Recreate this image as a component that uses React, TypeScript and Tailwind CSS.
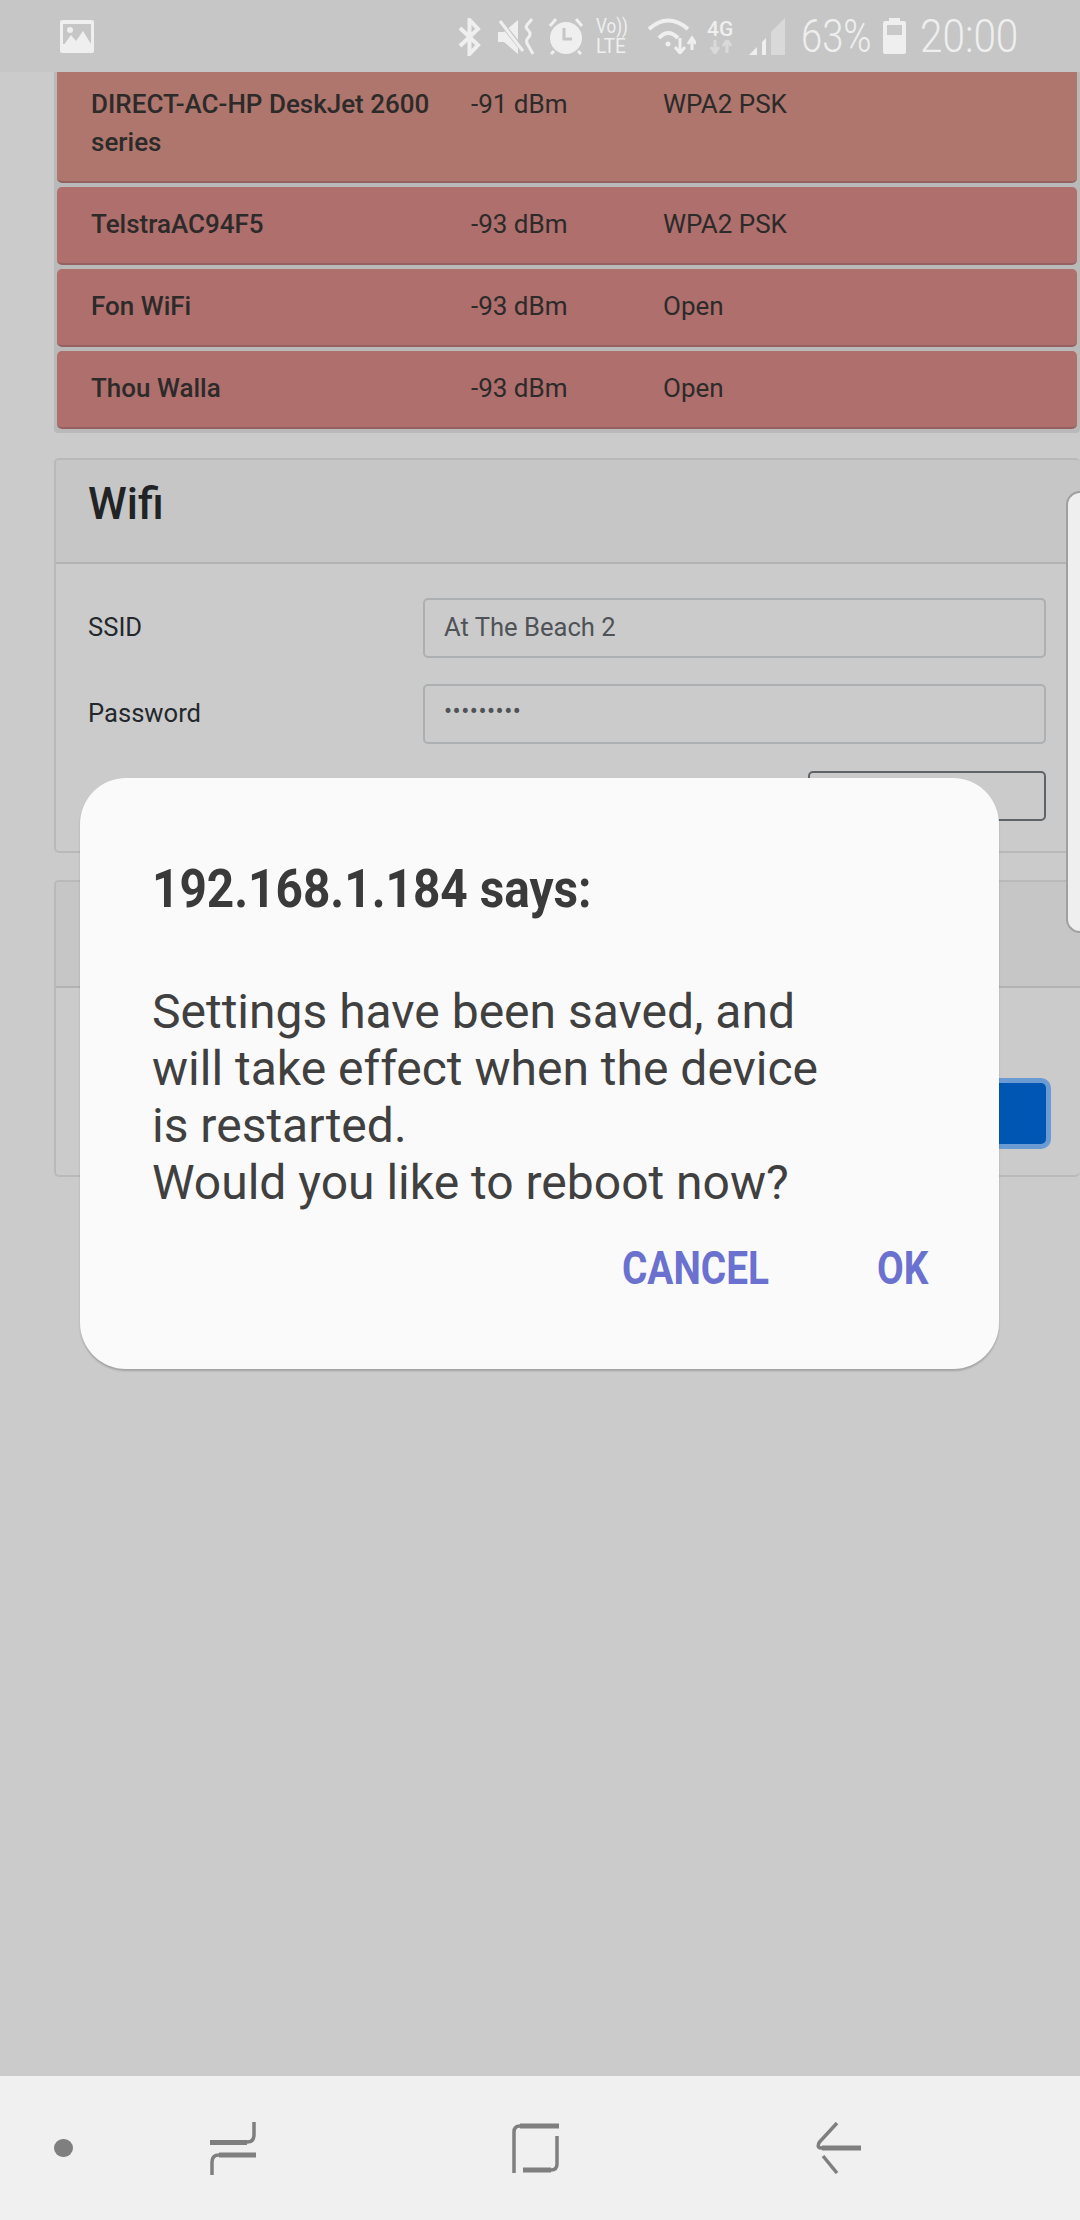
const FONT = "font-['Roboto',sans-serif]"

const NETWORKS = [
  { name: 'DIRECT-AC-HP DeskJet 2600 series', signal: '-91 dBm', security: 'WPA2 PSK', bg: 'bg-[#ae766d]' },
  { name: 'TelstraAC94F5', signal: '-93 dBm', security: 'WPA2 PSK', bg: 'bg-[#ae6f6d]' },
  { name: 'Fon WiFi', signal: '-93 dBm', security: 'Open', bg: 'bg-[#ae6f6d]' },
  { name: 'Thou Walla', signal: '-93 dBm', security: 'Open', bg: 'bg-[#ae6f6d]' },
]

function StatusIcons() {
  return (
    <div className="ml-auto flex items-center pr-[65px] text-[#efefef]">
      {/* bluetooth */}
      <svg width="23" height="38" viewBox="0 0 23 38" fill="none" stroke="currentColor" strokeWidth="4" className="mt-[1px]">
        <path d="M2 10 L20 27 L11.5 36 V2 L20 11 L2 28" />
      </svg>
      {/* mute + vibrate */}
      <svg width="38" height="38" viewBox="0 0 38 38" className="ml-[17px] mt-[1px]" fill="currentColor">
        <path d="M0 14 H6 L20 2 V36 L6 24 H0 Z" />
        <path d="M1 2 L28 36" stroke="#c6c6c6" strokeWidth="5" />
        <path d="M2 3 L25 33" stroke="currentColor" strokeWidth="3" />
        <path d="M34 1 L29 7 Q27 9 30 12 Q34 16 30 20 Q27 23 30 27 L35 36" fill="none" stroke="currentColor" strokeWidth="3" />
      </svg>
      {/* alarm */}
      <svg width="36" height="37" viewBox="0 0 36 37" className="ml-[12px]" fill="currentColor">
        <circle cx="18" cy="20" r="16" />
        <path d="M16 10 V21 H24" fill="none" stroke="#c6c6c6" strokeWidth="3" />
        <path d="M2 8 L8 1 M34 8 L28 1 M3 36 L6 33 M33 36 L30 33" fill="none" stroke="currentColor" strokeWidth="3" />
      </svg>
      {/* volte */}
      <div className="ml-[12px] flex w-[37px] flex-col text-[20px] leading-[20px]">
        <span className="origin-left scale-x-[.85] whitespace-nowrap">Vo))</span>
        <span className="origin-left scale-x-[.95] whitespace-nowrap">LTE</span>
      </div>
      {/* wifi */}
      <svg width="48" height="36" viewBox="0 0 48 36" className="ml-[15px]" fill="none" stroke="currentColor">
        <path d="M1 11 Q20 -6 40 11" strokeWidth="4" />
        <path d="M11 20 Q20 10 30 20" strokeWidth="4" />
        <circle cx="20" cy="26" r="2.5" fill="currentColor" stroke="none" />
        <path d="M32 20 V34 M27 29 L32 35 L37 29" strokeWidth="3" />
        <path d="M44 32 V21 M40 26 L44 20 L48 26" strokeWidth="3" />
      </svg>
      {/* 4g */}
      <div className="ml-[11px] flex w-[28px] flex-col items-start">
        <span className="whitespace-nowrap text-[21px] leading-[20px] font-medium">4G</span>
        <svg width="24" height="14" viewBox="0 0 24 14" fill="none" stroke="#d9d9d9" strokeWidth="3" className="mt-[1px] ml-[2px]">
          <path d="M6 0 V12 M2 7 L6 13 L10 7" />
          <path d="M18 13 V1 M14 6 L18 0 L22 6" />
        </svg>
      </div>
      {/* signal */}
      <svg width="36" height="37" viewBox="0 0 36 37" className="ml-[14px]">
        <path d="M22 14 L36 0 V37 H22 Z" fill="#d9d9d9" />
        <path d="M0 37 L8 29 V37 Z M13 24 L17 20 V37 H13 Z" fill="currentColor" />
      </svg>
      <span className="ml-[16px] w-[68px] origin-left scale-x-[.83] whitespace-nowrap text-[46px] leading-[46px] font-light">63%</span>
      {/* battery */}
      <svg width="23" height="36" viewBox="0 0 23 36" className="ml-[14px]">
        <path d="M6 0 H17 V3 H21 Q23 3 23 5 V34 Q23 36 21 36 H2 Q0 36 0 34 V5 Q0 3 2 3 H6 Z" fill="currentColor" />
        <rect x="4" y="7" width="15" height="10" fill="#c9c9c9" />
      </svg>
      <span className="ml-[14px] w-[95px] origin-left scale-x-[.88] whitespace-nowrap text-[46px] leading-[46px] font-light">20:00</span>
    </div>
  )
}

function StatusBar() {
  return (
    <div className="flex h-[72px] shrink-0 items-center bg-[#c6c6c6] pl-[60px]">
      <svg width="34" height="33" viewBox="0 0 34 33" className="mt-[1px]">
        <rect width="34" height="33" rx="2" fill="#efefef" />
        <rect x="3" y="4" width="28" height="20" fill="#c6c6c6" />
        <circle cx="10" cy="10" r="3" fill="#efefef" />
        <path d="M3 26 L11 15 L16 21 L23 11 L31 24 V27 H3 Z" fill="#efefef" />
      </svg>
      <StatusIcons />
    </div>
  )
}

function NetworkList() {
  return (
    <div className="-mt-[5px] flex flex-col gap-[4px] rounded-b-[4px] bg-[#b9b9b9] pr-[3px] pb-[4px] pl-[3px]">
      {NETWORKS.map((n) => (
        <div
          key={n.name}
          className={`flex rounded-[5px] border-b-2 border-[#946060] pt-[18px] pb-[20px] pl-[34px] text-[26px] leading-[38px] text-[#2d2a2a] ${n.bg}`}
        >
          <div className="w-[380px] pr-[30px] font-medium">{n.name}</div>
          <div className="w-[192px]">{n.signal}</div>
          <div>{n.security}</div>
        </div>
      ))}
    </div>
  )
}

function Field({ label, value, dots }: { label: string; value: string; dots?: boolean }) {
  return (
    <div className="flex items-start">
      <div className="w-[335px] pt-[10px] text-[25.6px] leading-[38px] text-[#24282c]">{label}</div>
      <div
        className={`flex h-[60px] w-[623px] items-center rounded-[5px] border-2 border-[#acb0b3] pl-[19px] text-[#4f5357] ${
          dots ? 'pb-[6px] text-[24px] tracking-[0.5px]' : 'pb-[2px] text-[25.6px]'
        }`}
      >
        {value}
      </div>
    </div>
  )
}

function WifiCard() {
  return (
    <div className="mt-[25px] h-[395px] overflow-hidden rounded-[5px] border-2 border-r-0 border-[#b9b9b9]">
      <div className="h-[104px] border-b-2 border-[#b3b3b3] bg-[#c6c6c6] pt-[16px] pl-[32px] text-[44px] leading-[56px] font-medium text-[#212325]">
        Wifi
      </div>
      <div className="flex flex-col pt-[34px] pl-[32px]">
        <Field label="SSID" value="At The Beach 2" />
        <div className="mt-[26px]">
          <Field label="Password" value="•••••••••" dots />
        </div>
        <div className="mt-[27px] ml-[720px] h-[50px] w-[238px] rounded-[5px] border-2 border-[#5f6468]" />
      </div>
    </div>
  )
}

function SaveCard() {
  return (
    <div className="mt-[27px] h-[297px] overflow-hidden rounded-[5px] border-2 border-r-0 border-[#b9b9b9]">
      <div className="h-[106px] border-b-2 border-[#b3b3b3] bg-[#c6c6c6]" />
      <div className="pt-[95px] pl-[782px]">
        <div className="h-[61px] w-[208px] rounded-[5px] bg-[#0056b3] shadow-[0_0_0_5px_#6b9bd3]" />
      </div>
    </div>
  )
}

function EdgePanel() {
  return (
    <div className="absolute top-[491px] right-0 h-[442px] w-[14px] rounded-l-[14px] border-y-2 border-l-2 border-[#a0a0a0] bg-[#efefef]" />
  )
}

function Dialog() {
  return (
    <div className="absolute top-[778px] left-[80px] flex h-[591px] w-[919px] flex-col rounded-[46px] bg-[#fafafa] pt-[81px] pl-[72px] shadow-[0_2px_2px_rgba(0,0,0,0.2)]">
      <div className="origin-left scale-x-[.885] whitespace-nowrap text-[54px] leading-[60px] font-bold text-[#3a3a3a]">
        192.168.1.184 says:
      </div>
      <div className="mt-[64px] w-[780px] text-[48px] leading-[57px] text-[#404040]">
        Settings have been saved, and
        <br />
        will take effect when the device
        <br />
        is restarted.
        <br />
        Would you like to reboot now?
      </div>
      <div className="mt-[32px] flex text-[46px] leading-[50px] font-bold text-[#6a71cf]">
        <span className="ml-[470px] w-[255px] origin-left scale-x-[.843] whitespace-nowrap">CANCEL</span>
        <span className="origin-left scale-x-[.843] whitespace-nowrap">OK</span>
      </div>
    </div>
  )
}

function NavBar() {
  return (
    <div className="flex h-[144px] shrink-0 items-center bg-[#f0f0f0] pl-[54px]">
      <div className="h-[18px] w-[19px] rounded-full bg-[#7f7f7f]" />
      <svg width="46" height="53" viewBox="0 0 46 53" fill="none" stroke="#7f7f7f" strokeWidth="3.5" className="ml-[137px]">
        <path d="M44 0 V13 Q44 20 37 20 H0" />
        <path d="M46 33 H9 Q2 33 2 40 V53" />
        <path d="M0 20.5 H37 M9 33 H46" strokeWidth="5" />
      </svg>
      <svg width="47" height="50" viewBox="0 0 47 50" fill="none" stroke="#7f7f7f" strokeWidth="3.5" className="ml-[256px]">
        <path d="M47 3 H8 Q2 3 2 9 V50" />
        <path d="M45 13 V41 Q45 47 39 47 H11" />
        <path d="M8 3 H47 M11 47 H39" strokeWidth="5" />
      </svg>
      <svg width="45" height="52" viewBox="0 0 45 52" fill="none" stroke="#7f7f7f" strokeWidth="3.5" className="ml-[257px]">
        <path d="M21 1 L3.5 20 Q0 26 6 26 H45" />
        <path d="M7 34 L21 51" />
        <path d="M6 26 H45" strokeWidth="5" />
      </svg>
    </div>
  )
}

export default function App() {
  return (
    <div className={`relative flex h-[2220px] w-[1080px] flex-col overflow-hidden bg-[#cbcbcb] ${FONT}`}>
      <StatusBar />
      <div className="flex-1 overflow-hidden pl-[54px]">
        <NetworkList />
        <WifiCard />
        <SaveCard />
      </div>
      <NavBar />
      <EdgePanel />
      <Dialog />
    </div>
  )
}
